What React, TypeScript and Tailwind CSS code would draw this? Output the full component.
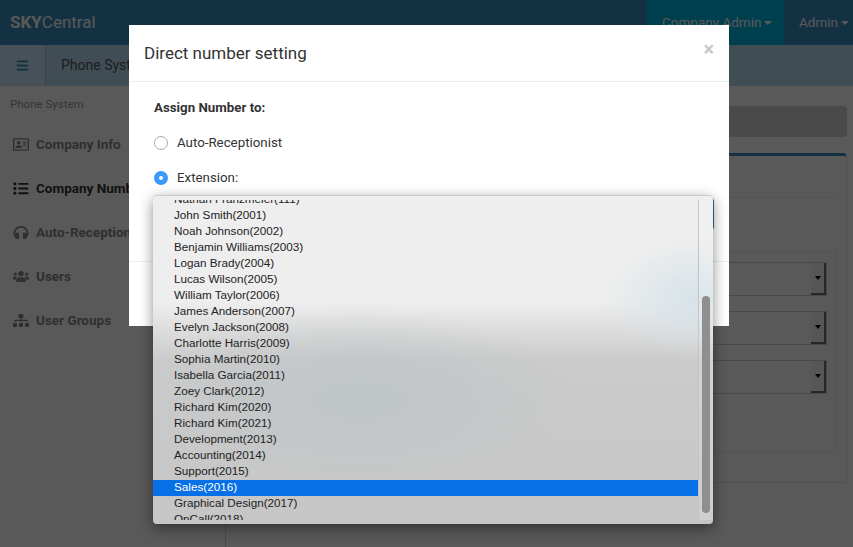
import React from 'react';
import { FaBars, FaHeadphones, FaList, FaRegAddressCard, FaSitemap, FaUsers } from 'react-icons/fa';

const menu = [
  { label: 'Company Info', icon: FaRegAddressCard, active: false },
  { label: 'Company Numbers', icon: FaList, active: true },
  { label: 'Auto-Receptionist', icon: FaHeadphones, active: false },
  { label: 'Users', icon: FaUsers, active: false },
  { label: 'User Groups', icon: FaSitemap, active: false },
];

const options = [
  'John Smith(2001)',
  'Noah Johnson(2002)',
  'Benjamin Williams(2003)',
  'Logan Brady(2004)',
  'Lucas Wilson(2005)',
  'William Taylor(2006)',
  'James Anderson(2007)',
  'Evelyn Jackson(2008)',
  'Charlotte Harris(2009)',
  'Sophia Martin(2010)',
  'Isabella Garcia(2011)',
  'Zoey Clark(2012)',
  'Richard Kim(2020)',
  'Richard Kim(2021)',
  'Development(2013)',
  'Accounting(2014)',
  'Support(2015)',
  'Sales(2016)',
  'Graphical Design(2017)',
];

const Caret = () => (
  <span className="ml-[3px] inline-block h-0 w-0 border-x-[4px] border-t-[4px] border-x-transparent border-t-white align-middle" />
);

const FakeSelect = () => (
  <div className="flex h-[34px] justify-end border border-[#d0d0d0] bg-white">
    <div className="flex w-[15px] items-center justify-center border-r-2 border-b-2 border-[#707070] bg-[#f6f6f6]">
      <span className="h-0 w-0 border-x-[3.5px] border-t-[4px] border-x-transparent border-t-black" />
    </div>
  </div>
);

export default function App() {
  return (
    <div className="relative h-[547px] w-[853px] overflow-hidden bg-white font-['Roboto',sans-serif]">
      {/* Page behind the dialog */}
      <div className="flex h-full flex-col">
        <header className="flex h-[45px] flex-shrink-0 items-center justify-between bg-[#3a8cc0] text-white">
          <div className="pl-[10px] text-[17px]">
            <b>SKY</b>Central
          </div>
          <div className="flex h-full text-[13.5px]">
            <div className="flex w-[137px] items-center bg-[#00b4de] pl-[15px]">
              Company Admin
              <Caret />
            </div>
            <div className="flex w-[69px] items-center pl-[15px]">
              Admin
              <Caret />
            </div>
          </div>
        </header>
        <div className="flex h-[41px] flex-shrink-0 items-center bg-[#b8dcf0] text-[14px] text-[#555]">
          <div className="flex h-full w-[46px] items-center justify-center border-r border-[#a8cce0] bg-[#cce8f8] text-[#3a8cc0]">
            <FaBars size={13} />
          </div>
          <div className="pl-[15px]">Phone System</div>
        </div>
        <div className="flex min-h-0 flex-1">
          <aside className="w-[226px] flex-shrink-0 border-r border-[#d8d8d8] pt-[11px]">
            <div className="pl-[10px] text-[11.5px] leading-[15px] text-[#999]">Phone System</div>
            <nav className="mt-[10px]">
              {menu.map((item) => (
                <div
                  key={item.label}
                  className={`flex h-[44px] items-center gap-[7px] pl-[13px] text-[13.5px] font-bold whitespace-nowrap ${
                    item.active ? 'text-[#333]' : 'text-[#888]'
                  }`}
                >
                  <item.icon size={15} className="w-[16px]" />
                  {item.label}
                </div>
              ))}
            </nav>
          </aside>
          <main className="flex-1 pt-[20px] pr-[6px]">
            <div className="h-[31px] rounded-sm bg-[#d4d4d4]" />
            <div className="mt-[16px] flex h-[330px] flex-col rounded-sm border border-[#e4e4e4] border-t-[3px] border-t-[#3a8cc0] pr-[9px]">
              <div className="mt-[41px] h-[1px] bg-[#eee]" />
              <div className="mt-[53px] flex h-[202px] flex-col gap-[15px] rounded-br-sm border-t border-r border-b border-[#eee] pt-[10px] pr-[9px]">
                <FakeSelect />
                <FakeSelect />
                <FakeSelect />
              </div>
            </div>
          </main>
        </div>
      </div>

      <div className="absolute inset-0 bg-[rgba(0,0,0,0.65)]" />

      {/* Dialog */}
      <div className="absolute top-[25px] left-[129px] flex h-[301px] w-[600px] flex-col bg-white text-[#333]">
        <div className="flex h-[57px] items-center justify-between border-b border-[#eee] px-[15px]">
          <h4 className="pt-[1px] text-[17px]">Direct number setting</h4>
          <span className="-mt-[9px] text-[20px] font-bold text-[#c8c8c8]">×</span>
        </div>
        <div className="flex-1 pt-[16px] pl-[25px] text-[13.3px] leading-[20px]">
          <div className="font-bold">Assign Number to:</div>
          <div className="mt-[15px] flex items-center gap-[9px]">
            <span className="h-[14px] w-[14px] rounded-full border border-[#aaa]" />
            Auto-Receptionist
          </div>
          <div className="mt-[15px] flex items-center gap-[9px]">
            <span className="flex h-[14px] w-[14px] items-center justify-center rounded-full bg-[#3b99fc]">
              <span className="h-[4px] w-[4px] rounded-full bg-white" />
            </span>
            Extension:
          </div>
          <div className="mt-[9px] h-[34px] w-[560px] rounded-sm border border-[#2c6a90]" />
        </div>
        <div className="flex h-[65px] justify-end border-t border-[#eee] pt-[16px] pr-[16px]">
          <div className="h-[32px] w-[70px] rounded-sm bg-[#2c6a90]" />
        </div>
      </div>

      {/* Native select popup */}
      <div className="absolute top-[195px] left-[153px] flex h-[329px] w-[560px] overflow-hidden rounded-[4px] border-t border-[#ccc] bg-[radial-gradient(ellipse_100px_60px_at_98%_31%,#d6e2e9_0%,rgba(214,226,233,0)_100%),radial-gradient(ellipse_220px_90px_at_37%_62%,#bfc5c8_0%,rgba(191,197,200,0)_100%),linear-gradient(180deg,#eeeeee_0%,#eeeeee_32%,#cbcbcb_50%,#c6c6c6_100%)] py-[4px] font-['Liberation_Sans',sans-serif] text-[11.7px] leading-[14px] text-[#222] shadow-[0_4px_14px_rgba(0,0,0,0.45)]">
        <div className="min-w-0 flex-1 overflow-hidden">
          <div className="-mt-[8px]">
            <div className="pb-[2px] pl-[21px]">Nathan Franzmeier(111)</div>
            {options.map((opt) => (
              <div
                key={opt}
                className={`pb-[2px] pl-[21px] ${opt === 'Sales(2016)' ? 'bg-[#0870e6] text-white' : ''}`}
              >
                {opt}
              </div>
            ))}
            <div className="pb-[2px] pl-[21px]">OnCall(2018)</div>
          </div>
        </div>
        <div className="w-[15px] flex-shrink-0 border-l border-[#c4c4c4] bg-white/15 px-[3px] pt-[96px]">
          <div className="h-[217px] rounded-full bg-[#8f8f8f]" />
        </div>
      </div>
    </div>
  );
}
